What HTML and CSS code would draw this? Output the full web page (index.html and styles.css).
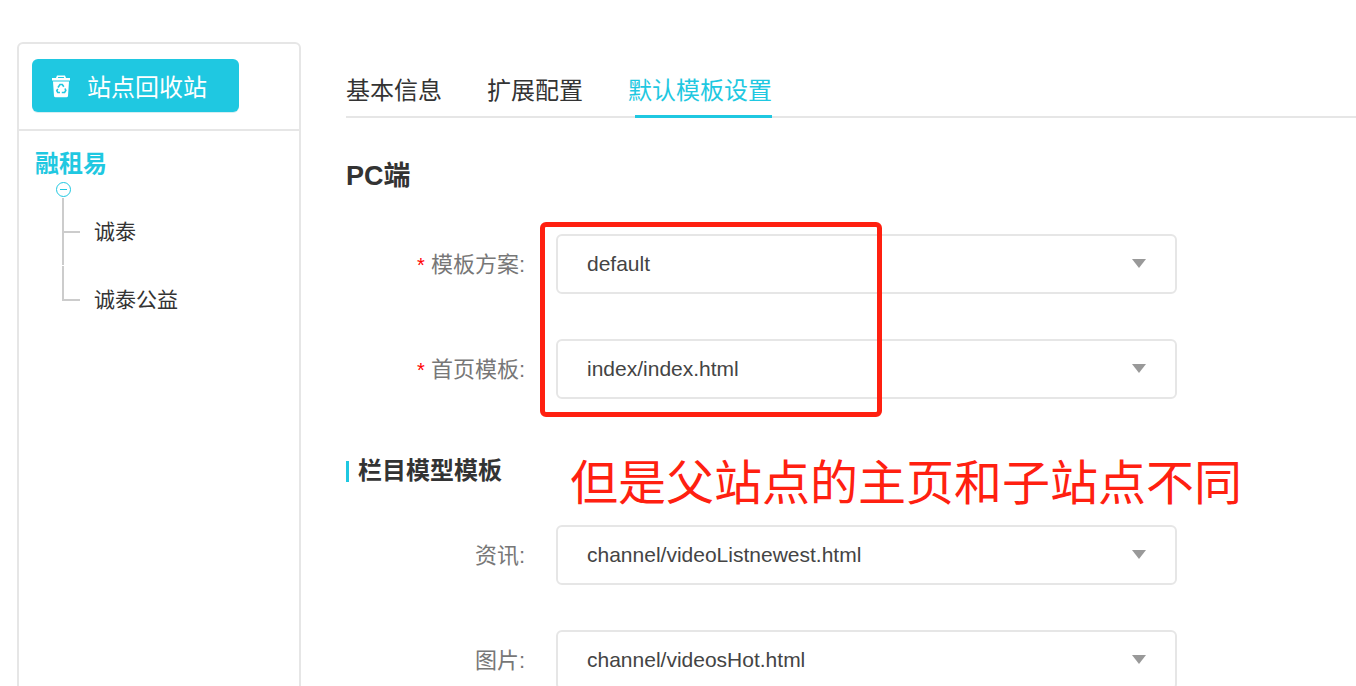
FILE: index.html
```html
<!DOCTYPE html>
<html lang="en">
<head>
  <meta charset="UTF-8" />
  <title>默认模板设置</title>
  <link rel="stylesheet" href="styles.css">
</head>
<body>

  <!-- Sidebar -->
  <aside class="sidebar">
    <div class="side-top">
      <button class="recycle-btn">
        <svg class="recycle-icon" viewBox="0 0 20 24" width="20" height="24">
          <path fill="#fff" d="M6 1.500h8l1 2.500h4v2.500H1V4h4zM7.200 3l-.4 1h6.400l-.4-1z"/>
          <path fill="#fff" d="M2 7.500h16l-1 14.500a1.500 1.500 0 0 1-1.500 1.200h-11A1.500 1.500 0 0 1 3 22z"/>
          <g fill="none" stroke="#1fc8e1" stroke-width="1.600">
            <path d="M7 13.500l2-3h2.300l1.500 2.300"/>
            <path d="M14 14.500l.8 2-1.200 2h-2.800"/>
            <path d="M9 18.500H6.800l-1-1.700 1-1.800"/>
          </g>
        </svg>
        <span>站点回收站</span>
      </button>
    </div>
    <div class="tree">
      <div class="tree-root">融租易</div>
      <span class="tree-toggle"></span>
      <div class="tree-children">
        <div class="tree-node">诚泰</div>
        <div class="tree-node last">诚泰公益</div>
      </div>
    </div>
  </aside>

  <!-- Main -->
  <main class="main">
    <div class="tabs">
      <a class="tab">基本信息</a>
      <a class="tab">扩展配置</a>
      <a class="tab active">默认模板设置</a>
    </div>

    <h2 class="section-title">PC端</h2>

    <div class="form-row">
      <label class="form-label"><i>*</i> 模板方案:</label>
      <div class="select">default</div>
    </div>
    <div class="form-row">
      <label class="form-label"><i>*</i> 首页模板:</label>
      <div class="select">index/index.html</div>
    </div>

    <h3 class="sub-title">栏目模型模板</h3>

    <div class="form-row">
      <label class="form-label">资讯:</label>
      <div class="select">channel/videoListnewest.html</div>
    </div>
    <div class="form-row">
      <label class="form-label">图片:</label>
      <div class="select">channel/videosHot.html</div>
    </div>

    <!-- Annotation drawn over the screenshot -->
    <div class="mark-box"></div>
    <div class="mark-text">但是父站点的主页和子站点不同</div>
  </main>

</body>
</html>
```

FILE: styles.css
```css
* {
  box-sizing: border-box;
  margin: 0;
  padding: 0;
  font-family: "Liberation Sans", "Noto Sans CJK SC", sans-serif;
}

html, body {
  height: 686px;
  overflow: hidden;
}

body {
  background: #fff;
  color: #333;
  display: flex;
  align-items: flex-start;
  padding: 42px 0 0 17px;
}

.sidebar {
  width: 284px;
  height: 700px;
  flex-shrink: 0;
  border: 2px solid #e6e6e6;
  border-radius: 6px;
}

.side-top {
  height: 87px;
  padding: 15px 0 0 13px;
  border-bottom: 2px solid #e6e6e6;
}

.recycle-btn {
  width: 207px;
  height: 53px;
  display: flex;
  align-items: center;
  padding-left: 19px;
  background: #1fc8e1;
  border: none;
  border-radius: 6px;
  box-shadow: 0 1px 0 #d5eef2;
  color: #fff;
  font-size: 24px;
}

.recycle-icon {
  margin-right: 16px;
}

.tree {
  position: relative;
  padding: 18px 0 0 16px;
}

.tree-root {
  color: #1fc8e1;
  font-size: 24px;
  font-weight: bold;
  line-height: 30px;
}

.tree-toggle {
  position: absolute;
  left: 37px;
  top: 51px;
  width: 15px;
  height: 15px;
  border: 1px solid #1fc8e1;
  border-radius: 50%;
}

.tree-toggle::after {
  content: "";
  position: absolute;
  left: 3px;
  top: 6px;
  width: 7px;
  height: 1px;
  background: #1fc8e1;
}

.tree-children {
  margin: 19px 0 0 27px;
}

.tree-node {
  position: relative;
  height: 68px;
  padding: 19px 0 0 32px;
  font-size: 21px;
  line-height: 30px;
  color: #333;
}

.tree-node::before {
  content: "";
  position: absolute;
  left: 0;
  top: 0;
  height: 67px;
  width: 2px;
  background: #ccc;
}

.tree-node::after {
  content: "";
  position: absolute;
  left: 0;
  top: 33px;
  width: 18px;
  height: 2px;
  background: #ccc;
}

.tree-node.last::before {
  height: 34px;
}

.main {
  position: relative;
  flex: 1;
  padding: 28px 0 0 45px;
}

.tabs {
  display: flex;
  gap: 45px;
  height: 48px;
  border-bottom: 2px solid #e6e6e6;
}

.tab {
  position: relative;
  height: 48px;
  font-size: 24px;
  line-height: 42px;
  color: #333;
}

.tab.active {
  color: #1fc8e1;
}

.tab.active::after {
  content: "";
  position: absolute;
  left: 7px;
  right: 0;
  bottom: 0;
  height: 3px;
  background: #1fc8e1;
}

.section-title {
  margin-top: 40px;
  font-size: 27px;
  line-height: 36px;
  color: #333;
}

.form-row {
  display: flex;
  align-items: center;
  height: 60px;
  margin-bottom: 45px;
}

.section-title + .form-row {
  margin-top: 40px;
}

.form-label {
  width: 179px;
  margin-right: 31px;
  padding-bottom: 5px;
  text-align: right;
  font-size: 22px;
  color: #777;
}

.form-label i {
  color: #f00;
  font-size: 20px;
  font-style: normal;
}

.select {
  position: relative;
  width: 621px;
  height: 60px;
  padding-left: 29px;
  border: 2px solid #e6e6e6;
  border-radius: 6px;
  font-size: 21px;
  line-height: 56px;
  color: #444;
}

.select::after {
  content: "";
  position: absolute;
  right: 29px;
  top: 23px;
  border-left: 7.500px solid transparent;
  border-right: 7.500px solid transparent;
  border-top: 9px solid #999;
}

.sub-title {
  position: relative;
  height: 30px;
  margin: 57px 0 39px;
  padding-left: 12px;
  font-size: 24px;
  line-height: 30px;
  color: #333;
}

.sub-title::before {
  content: "";
  position: absolute;
  left: 0;
  top: 5px;
  width: 3px;
  height: 21px;
  background: #1fc8e1;
}

.mark-box {
  position: absolute;
  left: 239px;
  top: 180px;
  width: 342px;
  height: 195px;
  border: 5px solid #ff2010;
  border-radius: 6px;
}

.mark-text {
  position: absolute;
  left: 269px;
  top: 407px;
  font-size: 48px;
  line-height: 70px;
  color: #ff2010;
  white-space: nowrap;
}
```
